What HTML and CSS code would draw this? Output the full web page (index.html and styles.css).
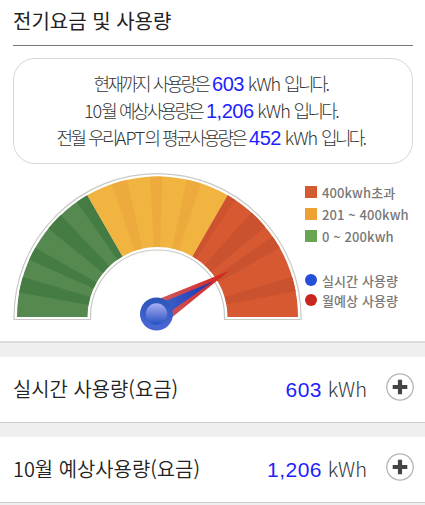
FILE: index.html
```
<!DOCTYPE html>
<html lang="ko">
<head>
<meta charset="utf-8">
<title>전기요금 및 사용량</title>
<link rel="stylesheet" href="styles.css">
</head>
<body>
<div class="energy">
	<h2 class="title">전기요금 및 사용량</h2>
	<div class="summary">
		<p>현재까지 사용량은 <b>603</b> <i>kWh</i> 입니다.</p>
		<p><i>10</i>월 예상사용량은 <b>1,206</b> <i>kWh</i> 입니다.</p>
		<p>전월 우리<i>APT</i>의 평균사용량은 <b>452</b> <i>kWh</i> 입니다.</p>
	</div>
	<div class="chart">
		<svg class="gauge" width="304" height="172" viewBox="0 170 304 172">
			<defs>
				<linearGradient id="hub" x1="0" y1="0" x2="0" y2="1">
					<stop offset="0" stop-color="#a9aef4"/>
					<stop offset="1" stop-color="#2450c0"/>
				</linearGradient>
				<linearGradient id="ring" x1="0" y1="0" x2="0" y2="1">
					<stop offset="0" stop-color="#2955b8"/>
					<stop offset="1" stop-color="#4b69d6"/>
				</linearGradient>
				<linearGradient id="blue" x1="0" y1="0" x2="1" y2="0">
					<stop offset="0" stop-color="#3f60cc"/>
					<stop offset="1" stop-color="#1d35ae"/>
				</linearGradient>
				<linearGradient id="red" x1="0" y1="0" x2="1" y2="0">
					<stop offset="0" stop-color="#cf5a5e"/>
					<stop offset="1" stop-color="#d3201c"/>
				</linearGradient>
			</defs>
			<path class="frame" d="M14 319.500V317A143.500 143.500 0 0 1 301 317V319.500H224.500V317A67 67 0 0 0 90.500 317V319.500Z"/>
			<!-- dial, angles run clockwise from the left end -->
			<g id="dial" transform="translate(157.500 317)"></g>
			<path fill="url(#red)" d="M160 298.500L229 271L170 319Z"/>
			<path fill="url(#blue)" d="M163 302L213 281.500L169 312.500Z"/>
			<circle cx="156.500" cy="314" r="16.500" fill="url(#ring)"/>
			<circle cx="156.500" cy="314" r="10.700" fill="url(#hub)"/>
		</svg>
		<ul class="legend">
			<li class="over"><span class="mark"></span>400kwh초과</li>
			<li class="mid"><span class="mark"></span>201 ~ 400kwh</li>
			<li class="low"><span class="mark"></span>0 ~ 200kwh</li>
			<li class="now"><span class="mark"></span>실시간 사용량</li>
			<li class="month"><span class="mark"></span>월예상 사용량</li>
		</ul>
	</div>
</div>
<div class="row">
	<span class="name">실시간 사용량(요금)</span>
	<span class="value"><b>603</b> <i>kWh</i></span>
	<svg class="plus" width="28" height="28" viewBox="0 0 28 28"><circle cx="14" cy="14" r="13.200"/><path d="M14 6.700V21.300M6.700 14H21.300"/></svg>
</div>
<div class="row">
	<span class="name">10월 예상사용량(요금)</span>
	<span class="value"><b>1,206</b> <i>kWh</i></span>
	<svg class="plus" width="28" height="28" viewBox="0 0 28 28"><circle cx="14" cy="14" r="13.200"/><path d="M14 6.700V21.300M6.700 14H21.300"/></svg>
</div>
<script src="gauge.js"></script>
</body>
</html>
```

FILE: styles.css
```
*{
	box-sizing: border-box;
}
body{
	margin: 0;
	height: 505px;
	overflow: hidden;
	background-color: #efefef;
	font-family: "Noto Sans CJK KR", "Liberation Sans", sans-serif;
	color: #222;
}
b{
	font-family: "Liberation Sans", sans-serif;
	font-weight: normal;
	color: #1e1eff;
}
i{
	font-style: normal;
}
.energy{
	height: 343px;
	padding: 0 12px 0 13px;
	background-color: #fff;
	border-bottom: 2px solid #dcdcdc;
}
.title{
	margin: 0;
	height: 46px;
	line-height: 42px;
	font-size: 20px;
	font-weight: 400;
	color: #222;
	border-bottom: 1px solid #777;
	white-space: nowrap;
}
.summary{
	height: 106px;
	margin-top: 12px;
	padding: 11px 5px 0 0;
	border: 1px solid #d6d6d6;
	border-radius: 22px;
	text-align: center;
}
.summary p{
	margin: 0;
	height: 27px;
	line-height: 27px;
	font-size: 18px;
	font-weight: 300;
	letter-spacing: -2.7px;
	word-spacing: 1.5px;
	white-space: nowrap;
	color: #333;
}
.summary b{
	font-size: 20px;
	letter-spacing: -0.5px;
}
.summary i{
	letter-spacing: -1px;
}
.chart{
	display: flex;
	height: 172px;
	margin: 6px -12px 0 -13px;
}
.gauge{
	flex: none;
}
.frame{
	fill: #fff;
	stroke: #c9c9c4;
	stroke-width: 1.2;
}
.legend{
	list-style: none;
	margin: 0;
	padding: 11px 0 0 1px;
	font-size: 13px;
	font-weight: 500;
	letter-spacing: 0.1px;
	color: #777;
}
.legend li{
	display: flex;
	align-items: center;
	height: 22px;
	white-space: nowrap;
}
.mark{
	width: 12px;
	height: 12px;
	margin-right: 5px;
}
.over .mark{
	background-color: #d45a32;
}
.mid .mark{
	background-color: #eda033;
}
.low .mark{
	background-color: #69a550;
}
.legend .now{
	height: 20px;
	margin-top: 23px;
}
.legend .month{
	height: 20px;
}
.now .mark{
	border-radius: 50%;
	background-color: #2450d8;
}
.month .mark{
	border-radius: 50%;
	background-color: #c8261f;
}
.row{
	display: flex;
	align-items: center;
	height: 66px;
	margin-top: 14px;
	padding: 0 11px 3px 13px;
	background-color: #fff;
	border-bottom: 1px solid #cfcfcf;
	font-size: 20px;
	white-space: nowrap;
}
.name{
	font-weight: 350;
	font-size: 19.9px;
	color: #222;
}
.value{
	margin-left: auto;
	font-weight: 300;
	color: #333;
}
.value b{
	font-size: 21px;
	letter-spacing: 0.5px;
}
.plus{
	margin: 0 0 3px 19px;
	fill: none;
}
.plus circle{
	stroke: #b5b5b5;
	stroke-width: 1.3;
}
.plus path{
	stroke: #444;
	stroke-width: 4.2;
}
```

FILE: gauge.js
```
// start angle, end angle, colour
var slices = [
	[0, 60, "#55894f"],
	[10, 16.5, "#457c43"], [24, 29.5, "#457c43"], [39, 46.5, "#457c43"], [55, 60, "#457c43"],
	[60, 120, "#f1b441"],
	[71, 77.5, "#ecab3c"], [87, 92, "#ecab3c"], [102, 108, "#ecab3c"],
	[120, 180, "#d75932"],
	[120, 123.5, "#cd532f"], [132, 140, "#cb522e"], [145, 150.5, "#cb522e"], [163.5, 169.5, "#cb522e"]
];

function point(r, deg){
	var a = deg * Math.PI / 180;
	return (-r * Math.cos(a)).toFixed(2) + " " + (-r * Math.sin(a)).toFixed(2);
}

for (var i = 0; i < slices.length; i++) {
	var s = slices[i];
	var p = document.createElementNS("http://www.w3.org/2000/svg", "path");
	p.setAttribute("d", "M" + point(140.5, s[0]) + "A140.5 140.5 0 0 1 " + point(140.5, s[1]) +
		"L" + point(70, s[1]) + "A70 70 0 0 0 " + point(70, s[0]) + "Z");
	p.setAttribute("fill", s[2]);
	document.getElementById("dial").appendChild(p);
}
```
